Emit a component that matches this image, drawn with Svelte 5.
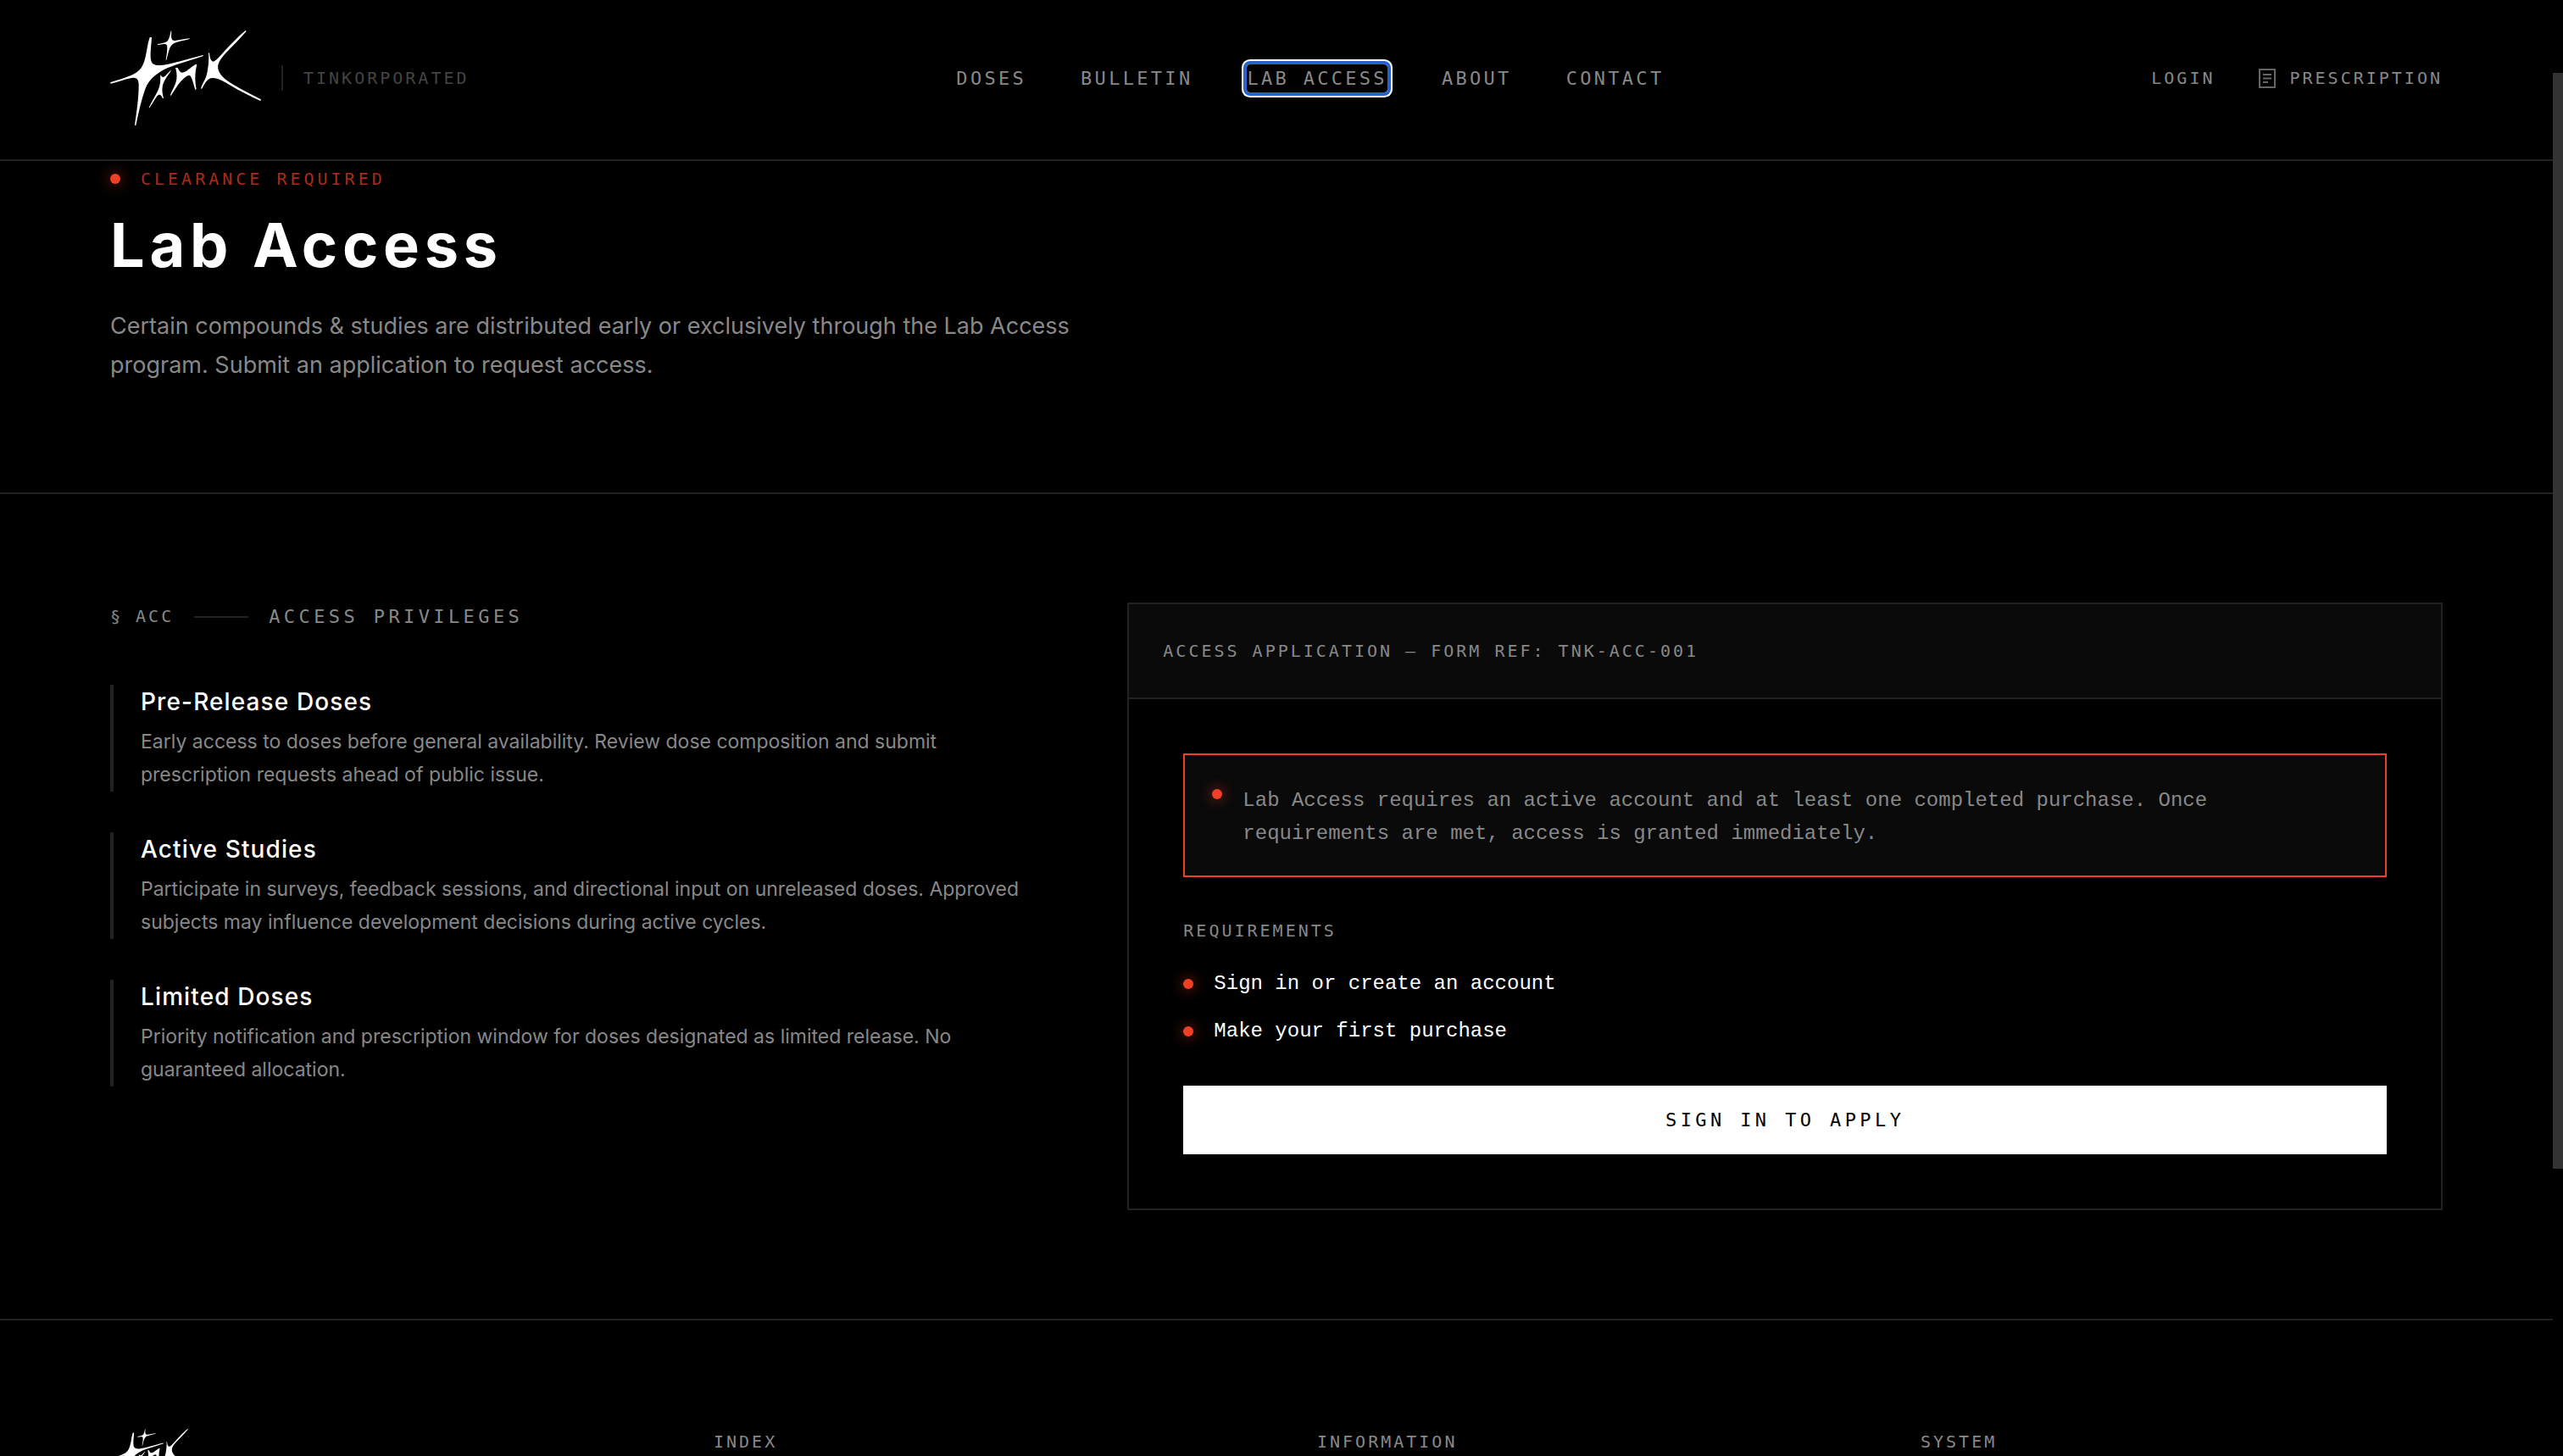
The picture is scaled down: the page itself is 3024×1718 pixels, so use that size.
<script lang="ts">
    const navLinks = [
        { label: 'Doses', href: '#doses' },
        { label: 'Bulletin', href: '#bulletin' },
        { label: 'Lab Access', href: '#lab-access' },
        { label: 'About', href: '#about' },
        { label: 'Contact', href: '#contact' }
    ];
    const current = 'Lab Access';

    const privileges = [
        {
            title: 'Pre-Release Doses',
            text: 'Early access to doses before general availability. Review dose composition and submit prescription requests ahead of public issue.'
        },
        {
            title: 'Active Studies',
            text: 'Participate in surveys, feedback sessions, and directional input on unreleased doses. Approved subjects may influence development decisions during active cycles.'
        },
        {
            title: 'Limited Doses',
            text: 'Priority notification and prescription window for doses designated as limited release. No guaranteed allocation.'
        }
    ];

    const requirements = ['Sign in or create an account', 'Make your first purchase'];
    const footerColumns = ['Index', 'Information', 'System'];
</script>

{#snippet logo()}
    <svg class="logo" viewBox="60 48 534 336" fill="#fff" role="img" aria-label="Tink">
        <path d="M200 72 L207 72 C205 105 201 130 204 150 C206 166 216 172 238 171 C275 168 330 150 388 135 L390 138 C350 152 300 165 262 181 C225 198 196 222 184 255 C170 295 160 340 151 384 L147 383 C153 340 161 290 161 240 C161 222 155 214 140 215 C115 218 88 230 62 236 L60 232 C90 222 130 212 154 196 C178 180 184 150 190 115 C193 98 196 84 200 72 Z" />
        <path d="M275 49 L277 51 C275 76 277 84 289 84 C305 82 325 77 341 76 L341 78 C318 84 297 88 286 93 C268 102 266 130 259 153 L257 152 C261 130 264 105 260 99 C255 93 242 98 228 99 L228 96 C245 93 258 91 264 84 C270 76 272 62 275 49 Z" />
        <path d="M237 204 C242 213 248 216 256 208 L274 189 L275 191 C264 207 252 222 247 238 C242 258 245 272 249 287 L246 289 C241 276 234 270 226 280 L199 322 L197 320 C208 298 222 276 230 258 C238 240 239 222 237 204 Z" />
        <path d="M291 180 L299 180 C304 190 309 200 320 196 C336 190 349 174 364 167 L367 169 C360 196 359 222 365 255 L361 258 C355 236 350 217 343 208 C336 203 324 214 313 225 C298 240 287 261 275 279 L273 276 C281 256 293 238 295 219 C297 203 294 191 291 180 Z" />
        <path d="M408 127 L411 127 C413 143 415 156 425 158 C442 152 466 116 492 92 C508 76 524 60 539 48 L542 50 C520 76 491 105 468 129 C449 150 439 166 442 184 C446 204 466 222 492 237 C526 257 560 275 594 292 L592 297 C556 281 516 261 482 240 C458 226 440 216 423 216 C404 216 396 234 384 255 L381 253 C387 234 399 220 403 199 C408 174 410 150 408 127 Z" />
    </svg>
{/snippet}

<div class="page">
    <header>
        <a class="brand" href="#home">
            {@render logo()}
            <span class="brand-name">Tinkorporated</span>
        </a>
        <nav>
            {#each navLinks as link}
                <a href={link.href} class:focused={link.label === current}>{link.label}</a>
            {/each}
        </nav>
        <div class="account">
            <a href="#login">Login</a>
            <button class="prescription">
                <svg viewBox="0 0 22 24" width="22" height="24" fill="none" stroke="#666" stroke-width="2" aria-hidden="true">
                    <rect x="3" y="2" width="18" height="21" />
                    <path d="M7 8H17M7 12.5H17M7 17H13" />
                </svg>
                Prescription
            </button>
        </div>
    </header>

    <main>
        <section class="hero">
            <p class="clearance"><span class="dot"></span>Clearance Required</p>
            <h1>Lab Access</h1>
            <p class="intro">
                Certain compounds &amp; studies are distributed early or exclusively through the Lab Access program.
                Submit an application to request access.
            </p>
        </section>

        <section class="access">
            <div class="privileges">
                <div class="section-head">
                    <span class="ref">§ ACC</span>
                    <span class="rule"></span>
                    <h2>Access Privileges</h2>
                </div>
                <ul class="privilege-list">
                    {#each privileges as item}
                        <li>
                            <h3>{item.title}</h3>
                            <p>{item.text}</p>
                        </li>
                    {/each}
                </ul>
            </div>

            <div class="panel">
                <div class="panel-head">Access Application — Form Ref: TNK-ACC-001</div>
                <div class="panel-body">
                    <div class="notice">
                        <span class="dot"></span>
                        <p>
                            Lab Access requires an active account and at least one completed purchase. Once
                            requirements are met, access is granted immediately.
                        </p>
                    </div>
                    <h4>Requirements</h4>
                    <ul class="requirements">
                        {#each requirements as requirement}
                            <li><span class="dot"></span>{requirement}</li>
                        {/each}
                    </ul>
                    <button class="apply">Sign in to apply</button>
                </div>
            </div>
        </section>
    </main>

    <footer>
        <div class="footer-logo">{@render logo()}</div>
        {#each footerColumns as column}
            <h5>{column}</h5>
        {/each}
    </footer>
</div>
<div class="scroll-thumb"></div>

<style>
    :global(body) {
        background: #000;
        overflow: hidden;
    }

    .page {
        height: 100vh;
        overflow: hidden;
        margin-right: 12px;
        background: #000;
        color: #888;
        font-family: Inter, 'Liberation Sans', sans-serif;
    }

    h1, h2, h3, h4, h5, p, ul {
        margin: 0;
        padding: 0;
        font-weight: 400;
    }

    ul {
        list-style: none;
    }

    a {
        color: inherit;
        text-decoration: none;
    }

    button {
        border: none;
        padding: 0;
        background: none;
        color: inherit;
        cursor: pointer;
    }

    header,
    .clearance,
    .section-head,
    h2,
    .panel,
    button,
    h5 {
        font-family: 'DejaVu Sans Mono', 'Liberation Mono', monospace;
    }

    header {
        display: flex;
        align-items: center;
        justify-content: space-between;
        padding: 36px 130px 40px;
        border-bottom: 2px solid #222;
        text-transform: uppercase;
    }

    .logo {
        display: block;
        width: 178px;
        height: 112px;
    }

    .brand {
        display: flex;
        align-items: center;
        gap: 24px;
    }

    .brand-name {
        border-left: 2px solid #222;
        padding-left: 24px;
        font-size: 20px;
        line-height: 30px;
        letter-spacing: 0.15em;
        color: #444;
    }

    nav {
        display: flex;
        gap: 64px;
        font-size: 22px;
        line-height: 33px;
        letter-spacing: 0.15em;
    }

    .focused {
        border-radius: 4px;
        box-shadow: 0 0 0 4px #2a62cc, 0 0 0 6px #fff;
    }

    .account {
        display: flex;
        align-items: center;
        gap: 50px;
        font-size: 20px;
        line-height: 30px;
        letter-spacing: 0.15em;
    }

    .prescription {
        display: flex;
        align-items: center;
        gap: 16px;
        font-size: 20px;
        line-height: 30px;
        letter-spacing: 0.15em;
        text-transform: uppercase;
    }

    .dot {
        flex: none;
        width: 12px;
        height: 12px;
        border-radius: 50%;
        background: #ee4026;
        box-shadow: 0 0 16px rgba(238, 64, 38, 0.7);
    }

    .hero {
        padding: 6px 130px 127px;
        border-bottom: 2px solid #222;
    }

    .clearance {
        display: flex;
        align-items: center;
        gap: 24px;
        font-size: 20px;
        line-height: 30px;
        letter-spacing: 0.2em;
        text-transform: uppercase;
        color: #a82c1a;
    }

    h1 {
        margin: 23px 0 34px;
        font-size: 72px;
        font-weight: 700;
        line-height: 79px;
        letter-spacing: 0.08em;
        color: #fff;
    }

    .intro {
        max-width: 1160px;
        font-size: 27px;
        line-height: 46px;
    }

    .access {
        display: grid;
        grid-template-columns: 1fr 1.4fr;
        gap: 92px;
        align-items: start;
        padding: 128px 130px;
        border-bottom: 2px solid #222;
    }

    .section-head {
        display: flex;
        align-items: center;
        gap: 24px;
        margin-bottom: 64px;
        line-height: 33px;
        text-transform: uppercase;
    }

    .ref {
        font-size: 20px;
        letter-spacing: 0.15em;
    }

    .rule {
        width: 64px;
        height: 2px;
        background: #222;
    }

    h2 {
        font-size: 22px;
        letter-spacing: 0.2em;
    }

    .privilege-list {
        display: flex;
        flex-direction: column;
        gap: 48px;
    }

    .privilege-list li {
        border-left: 4px solid #222;
        padding-left: 32px;
    }

    h3 {
        margin-bottom: 8px;
        font-size: 28px;
        font-weight: 500;
        line-height: 40px;
        letter-spacing: 0.04em;
        color: #fff;
    }

    .privilege-list p {
        font-size: 23px;
        line-height: 39px;
    }

    .panel {
        border: 2px solid #222;
    }

    .panel-head {
        padding: 40px;
        border-bottom: 2px solid #222;
        background: #0a0a0a;
        font-size: 20px;
        line-height: 30px;
        letter-spacing: 0.15em;
        text-transform: uppercase;
    }

    .panel-body {
        padding: 64px;
    }

    .notice,
    .requirements {
        font-family: 'Liberation Mono', monospace;
        font-size: 24px;
    }

    .notice {
        display: flex;
        gap: 24px;
        padding: 34px 32px 30px;
        border: 2px solid #ee4026;
        background: #0a0a0a;
        line-height: 39px;
    }

    .notice p {
        max-width: 1200px;
    }

    .notice .dot {
        margin-top: 6px;
    }

    h4 {
        margin: 48px 0 28px;
        font-size: 20px;
        line-height: 30px;
        letter-spacing: 0.15em;
        text-transform: uppercase;
    }

    .requirements {
        display: flex;
        flex-direction: column;
        gap: 16px;
        margin-bottom: 44px;
        line-height: 40px;
        color: #fff;
    }

    .requirements li {
        display: flex;
        align-items: center;
        gap: 24px;
    }

    .apply {
        display: block;
        width: 100%;
        padding: 24px;
        background: #fff;
        color: #000;
        font-size: 22px;
        line-height: 33px;
        letter-spacing: 0.2em;
        text-transform: uppercase;
    }

    footer {
        display: grid;
        grid-template-columns: repeat(4, 1fr);
        gap: 96px;
        padding: 128px 130px;
    }

    .footer-logo .logo {
        width: 102px;
        height: 64px;
    }

    h5 {
        font-size: 20px;
        line-height: 30px;
        letter-spacing: 0.15em;
        text-transform: uppercase;
    }

    /* thumb of the page scrollbar, always visible over the right gutter */
    .scroll-thumb {
        position: fixed;
        top: 5vh;
        right: 0;
        width: 12px;
        height: 1293px;
        background: #333;
    }
</style>
